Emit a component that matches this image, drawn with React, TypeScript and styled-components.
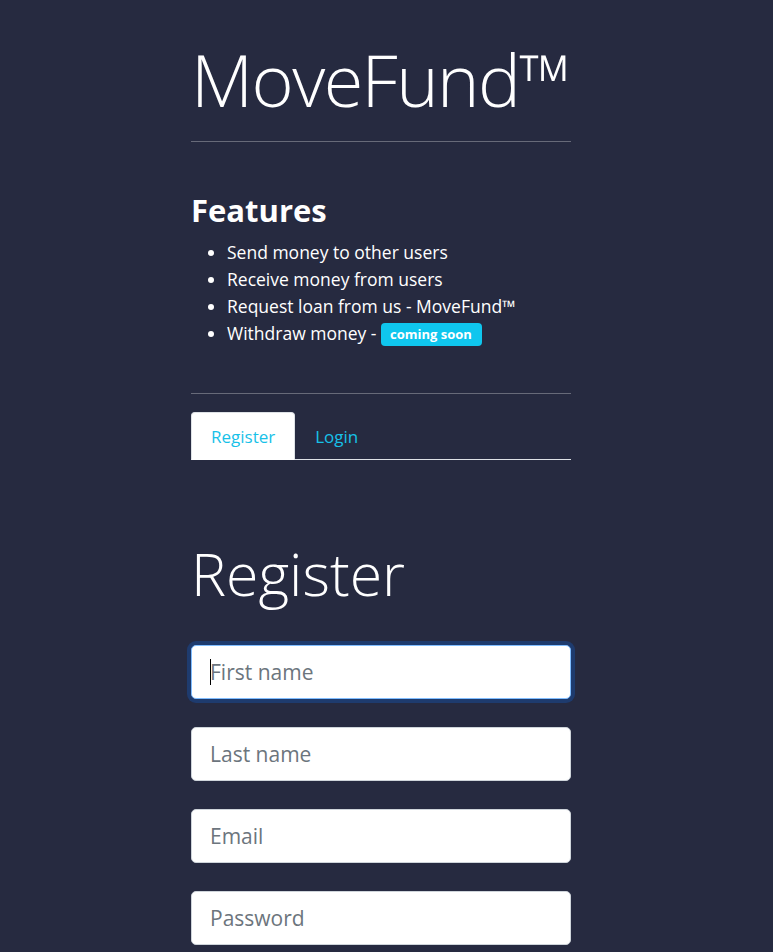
import React from "react";
import styled, { createGlobalStyle } from "styled-components";

const Global = createGlobalStyle`
  html, body { margin: 0; padding: 0; background: #262a40; }
  body { font-family: "Open Sans", "Noto Sans", sans-serif; color: #ffffff; }
  * { box-sizing: border-box; }
`;

const Page = styled.div`
  min-height: 952px;
  background: #262a40;
  display: flex;
  justify-content: center;
  padding: 0 11px 0 0;
`;

const Container = styled.div`
  width: 380px;
  display: flex;
  flex-direction: column;
`;

const Brand = styled.h1`
  margin: 36px 0 0;
  font-size: 72px;
  font-weight: 300;
  line-height: 86px;
  letter-spacing: -1.6px;
  color: #ffffff;
`;

const Rule = styled.hr<{ $top: number }>`
  margin: ${(p) => p.$top}px 0 0;
  border: 0;
  border-top: 1px solid rgba(255, 255, 255, 0.3);
  height: 0;
`;

const SectionTitle = styled.h2`
  margin: 48px 0 0;
  font-size: 31px;
  font-weight: 700;
  line-height: 40px;
`;

const FeatureList = styled.ul`
  margin: 9px 0 0;
  padding-left: 36px;
  font-size: 17.5px;
  line-height: 27px;
`;

const Badge = styled.span`
  display: inline-block;
  background: #0fc6ee;
  color: #ffffff;
  font-size: 13px;
  font-weight: 700;
  line-height: 17px;
  padding: 3px 10px 3px 9px;
  border-radius: 4px;
  vertical-align: 1px;
`;

const Tabs = styled.div`
  margin-top: 18px;
  display: flex;
  border-bottom: 1px solid #dee2e6;
`;

const Tab = styled.a<{ $active?: boolean }>`
  display: block;
  height: 48px;
  margin-bottom: -1px;
  padding: 0 19px;
  font-size: 17px;
  line-height: 48px;
  color: #17c1e8;
  text-decoration: none;
  border: 1px solid ${(p) => (p.$active ? "#dee2e6" : "transparent")};
  border-bottom-color: ${(p) => (p.$active ? "#ffffff" : "transparent")};
  background: ${(p) => (p.$active ? "#ffffff" : "transparent")};
  border-radius: 4px 4px 0 0;
`;

const FormTitle = styled.h1`
  margin: 78px 0 0;
  font-size: 59px;
  font-weight: 300;
  line-height: 70px;
`;

const Form = styled.form`
  margin-top: 37px;
  display: flex;
  flex-direction: column;
  gap: 28px;
`;

const Field = styled.div`
  position: relative;
`;

const Input = styled.input<{ $focused?: boolean }>`
  display: block;
  width: 100%;
  height: 54px;
  padding: 0 18px;
  font-family: "Open Sans", "Noto Sans", sans-serif;
  font-size: 21px;
  color: #495057;
  background: #ffffff;
  border: 1px solid ${(p) => (p.$focused ? "#80bdff" : "#ced4da")};
  border-radius: 5px;
  box-shadow: ${(p) => (p.$focused ? "0 0 0 4px #1e3b6e" : "none")};
  outline: none;
  &::placeholder { color: #6c757d; }
`;

const Caret = styled.span`
  position: absolute;
  left: 19px;
  top: 14px;
  width: 1px;
  height: 26px;
  background: #000000;
`;

export default function App() {
  return (
    <>
      <Global />
      <Page>
        <Container>
          <Brand>MoveFund™</Brand>
          <Rule $top={19} />
          <SectionTitle>Features</SectionTitle>
          <FeatureList>
            <li>Send money to other users</li>
            <li>Receive money from users</li>
            <li>Request loan from us - MoveFund™</li>
            <li>
              Withdraw money - <Badge>coming soon</Badge>
            </li>
          </FeatureList>
          <Rule $top={46} />
          <Tabs>
            <Tab $active href="#">Register</Tab>
            <Tab href="#">Login</Tab>
          </Tabs>
          <FormTitle>Register</FormTitle>
          <Form>
            <Field>
              <Input $focused placeholder="First name" />
              <Caret />
            </Field>
            <Field>
              <Input placeholder="Last name" />
            </Field>
            <Field>
              <Input placeholder="Email" />
            </Field>
            <Field>
              <Input placeholder="Password" type="password" />
            </Field>
          </Form>
        </Container>
      </Page>
    </>
  );
}
